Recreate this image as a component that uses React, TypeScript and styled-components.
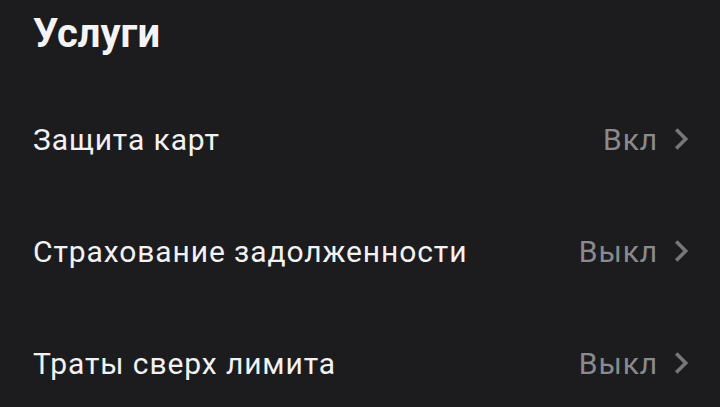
import styled, { createGlobalStyle } from 'styled-components';

const GlobalStyle = createGlobalStyle`
  html, body {
    margin: 0;
    padding: 0;
    background: #1c1c1e;
  }
  body {
    font-family: Roboto, 'Noto Sans', sans-serif;
  }
`;

const Screen = styled.div`
  width: 720px;
  height: 407px;
  overflow: hidden;
  background: #1c1c1e;
  padding: 0 31px 0 33px;
  box-sizing: border-box;
`;

const Title = styled.h1`
  margin: 0;
  padding-top: 10px;
  height: 83px;
  box-sizing: border-box;
  font-size: 40px;
  font-weight: 700;
  color: #f4f4f6;
`;

const List = styled.div`
  display: flex;
  flex-direction: column;
`;

const Row = styled.div`
  display: flex;
  align-items: center;
  justify-content: space-between;
  height: 112px;
`;

const Label = styled.span`
  font-size: 30px;
  letter-spacing: 0.9px;
  color: #f2f2f4;
`;

const Value = styled.span`
  display: flex;
  align-items: center;
  gap: 15px;
  font-size: 30px;
  letter-spacing: 0.9px;
  color: #8a8a8e;
`;

const Chevron = () => (
  <svg width="16" height="24" viewBox="0 0 16 24" fill="none">
    <path d="M3.2 2.5l9.5 9.5-9.5 9.5" stroke="#767679" strokeWidth="3.6" />
  </svg>
);

const items = [
  { label: 'Защита карт', value: 'Вкл' },
  { label: 'Страхование задолженности', value: 'Выкл' },
  { label: 'Траты сверх лимита', value: 'Выкл' },
];

export default function App() {
  return (
    <>
      <GlobalStyle />
      <Screen>
        <Title>Услуги</Title>
        <List>
          {items.map((it) => (
            <Row key={it.label}>
              <Label>{it.label}</Label>
              <Value>
                {it.value}
                <Chevron />
              </Value>
            </Row>
          ))}
        </List>
      </Screen>
    </>
  );
}
